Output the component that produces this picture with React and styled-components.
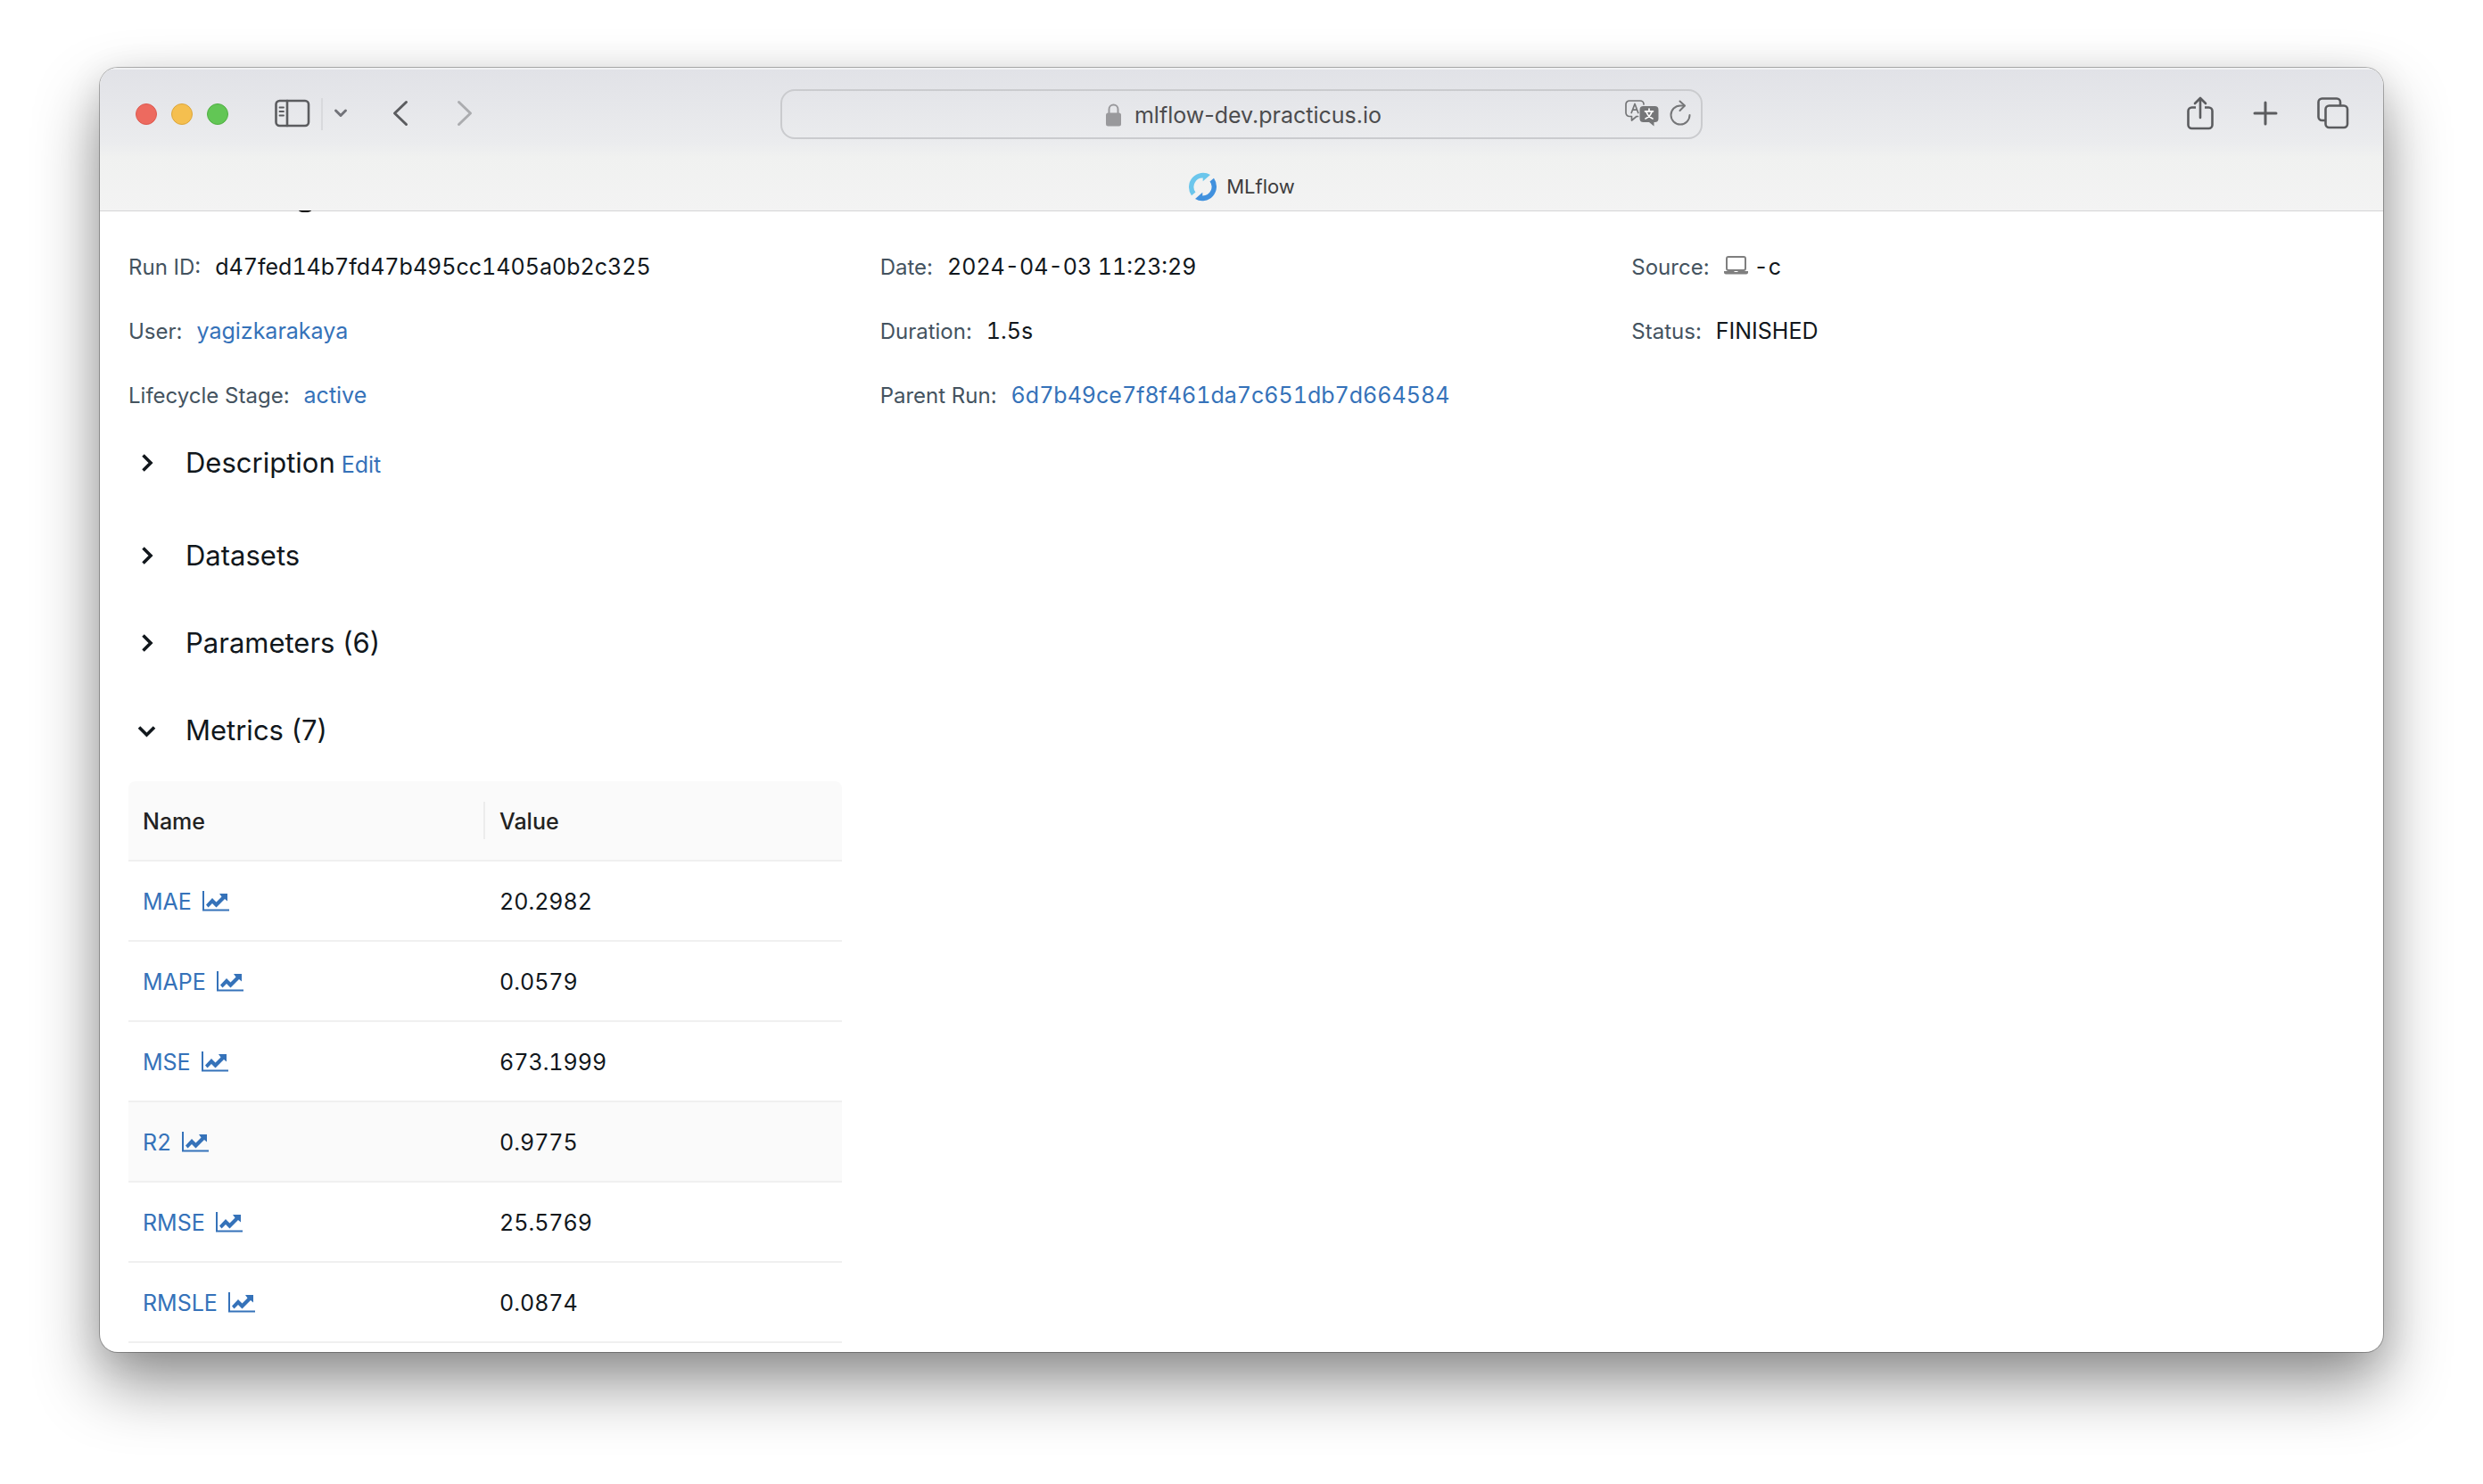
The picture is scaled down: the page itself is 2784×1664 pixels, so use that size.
import React from "react";
import styled, { createGlobalStyle } from "styled-components";

const GlobalStyle = createGlobalStyle`
  *, *::before, *::after { box-sizing: border-box; }
  body {
    margin: 0;
    background: #fff;
    color: #11171c;
    font-family: Inter, "Liberation Sans", sans-serif;
    font-size: 25px;
  }
  svg { display: block; flex: none; }
`;

const Desktop = styled.div`
  height: 100vh;
  padding: 76px 112px 148px;
  overflow: hidden;
`;

const BrowserWindow = styled.div`
  height: 100%;
  display: flex;
  flex-direction: column;
  border-radius: 20px;
  overflow: hidden;
  background: #fff;
  box-shadow: 0 0 0 1px rgba(0, 0, 0, 0.28), 0 36px 72px rgba(0, 0, 0, 0.42), 0 8px 40px rgba(0, 0, 0, 0.1);
`;

const Chrome = styled.header`
  flex: none;
  background: linear-gradient(#e1e2e7 0, #e4e5e9 28px, #ebecee 84px, #f0f1f0 100px, #f3f3f3 160px);
  border-bottom: 1px solid #d4d5d6;
  box-shadow: inset 0 2px 0 rgba(255, 255, 255, 0.5);
`;

const Toolbar = styled.div`
  height: 104px;
  padding: 0 38px;
  display: grid;
  grid-template-columns: 1fr minmax(0, 1034px) 1fr;
  align-items: center;
`;

const ToolGroup = styled.div`
  display: flex;
  align-items: center;
  justify-content: ${(p) => (p.$end ? "flex-end" : "flex-start")};
  gap: ${(p) => p.$gap}px;
  margin-left: ${(p) => p.$push || 0}px;
`;

const Light = styled.button`
  width: 24px;
  height: 24px;
  padding: 0;
  border-radius: 50%;
  border: 1px solid ${(p) => p.$edge};
  background: ${(p) => p.$fill};
`;

const IconButton = styled.button`
  display: flex;
  padding: 0 0 2px;
  border: 0;
  background: none;
  color: ${(p) => p.$tone || "#5b5c5f"};
`;

const Divider = styled.span`
  width: 2px;
  height: 36px;
  background: #d8d9dc;
`;

const AddressBar = styled.div`
  height: 56px;
  display: grid;
  grid-template-columns: 1fr auto 1fr;
  align-items: center;
  padding: 0 11px;
  border: 2px solid #cacbce;
  border-radius: 16px;
  color: #4c4c4e;
`;

const Address = styled.div`
  grid-column: 2;
  display: flex;
  align-items: center;
  gap: 13px;
  line-height: 32px;
  padding: 2px 0 0 4px;
`;

const TabStrip = styled.div`
  height: 56px;
  padding-top: 2px;
  display: flex;
  align-items: center;
  justify-content: center;
  gap: 10px;
  font-size: 22px;
  color: #3d3d3e;
`;

const Page = styled.main`
  flex: 1;
  min-height: 0;
  overflow: hidden;
  margin-top: -1px;
  padding-left: 32px;
`;

const TitleTail = styled.div`
  width: 14px;
  height: 2px;
  margin: 0 0 25px 191px;
  border-radius: 0 0 7px 7px / 0 0 2px 2px;
  background: #000;
`;

const Details = styled.dl`
  display: grid;
  grid-template-columns: repeat(3, 1fr);
  margin: 0;
`;

const Detail = styled.div`
  height: 72px;
  display: flex;
  align-items: baseline;
  gap: 16px;
  line-height: 72px;
`;

const Term = styled.dt`
  font-size: 24px;
  color: #44535f;
`;

const Definition = styled.dd`
  display: flex;
  align-items: baseline;
  gap: 7px;
  margin: 0;
  font-variant-numeric: tabular-nums;
`;

const Link = styled.a`
  color: #3572b9;
  text-decoration: none;
`;

const Section = styled.section`
  display: flex;
  align-items: center;
  height: ${(p) => (p.$first ? 80 : 98)}px;
  margin-bottom: ${(p) => (p.$first ? 15 : 0)}px;
`;

const SectionToggle = styled.button`
  display: flex;
  align-items: center;
  gap: 26px;
  padding: 0 0 0 4px;
  border: 0;
  background: none;
  color: inherit;
  font: inherit;
  font-size: 31px;
  line-height: 44px;
`;

const EditLink = styled(Link)`
  line-height: 44px;
  margin: 4px 0 0 7px;
`;

const MetricsTable = styled.table`
  width: 800px;
  max-width: 100%;
  margin-top: 8px;
  table-layout: fixed;
  border-collapse: separate;
  border-spacing: 0;
  line-height: 40px;
  font-variant-numeric: tabular-nums;
`;

const HeadCell = styled.th`
  height: 90px;
  padding: 2px 16px 0;
  position: relative;
  text-align: left;
  font-weight: 500;
  color: #222;
  background: #fafafa;
  border-bottom: 2px solid #f0f0f0;
  &:first-child { border-top-left-radius: 8px; }
  &:last-child { border-top-right-radius: 8px; }
  &:first-child::after {
    content: "";
    position: absolute;
    right: 0;
    top: 23px;
    width: 2px;
    height: 42px;
    background: #ececec;
  }
`;

const Cell = styled.td`
  height: 90px;
  padding: 2px 16px 0;
  background: ${(p) => (p.$active ? "#fafafa" : "#fff")};
  border-bottom: 2px solid #f0f0f0;
`;

const MetricLink = styled(Link)`
  display: flex;
  align-items: center;
  gap: 11px;
`;

const Stroke = ({ w, h, sw = 3, children }) => (
  <svg width={w} height={h} viewBox={`0 0 ${w} ${h}`} fill="none" stroke="currentColor" strokeWidth={sw} strokeLinecap="round" strokeLinejoin="round" aria-hidden="true">
    {children}
  </svg>
);

const SidebarIcon = () => (
  <Stroke w={40} h={32} sw={2.6}>
    <rect x="1.5" y="2" width="36.5" height="28" rx="4" />
    <path d="M14 2v28" />
    <path strokeWidth="1.8" d="M5.5 9.5h4.500M5.5 14h4.500M5.500 18.500h4.500" />
  </Stroke>
);
const SmallChevron = () => <Stroke w={16} h={12} sw={3}><path d="M2.500 3l5.500 5.500L13.500 3" /></Stroke>;
const BackIcon = () => <Stroke w={18} h={30}><path d="M15.500 2.500L2.500 15l13 12.500" /></Stroke>;
const ForwardIcon = () => <Stroke w={18} h={30}><path d="M2.500 2.500L15.500 15l-13 12.500" /></Stroke>;
const ShareIcon = () => (
  <Stroke w={30} h={38} sw={2.6}>
    <path d="M10 12.500H5.500a4 4 0 0 0-4 4V32a4 4 0 0 0 4 4h19a4 4 0 0 0 4-4V16.500a4 4 0 0 0-4-4H20" strokeLinecap="butt" />
    <path d="M15 24V2.500M9 8l6-6 6 6" />
  </Stroke>
);
const PlusIcon = () => <Stroke w={28} h={28}><path d="M14 2v24M2 14h24" /></Stroke>;
const TabsIcon = () => (
  <Stroke w={36} h={36} sw={2.6}>
    <rect x="9.500" y="9.500" width="24.500" height="24.500" rx="4" />
    <path d="M26 9V5.500a4 4 0 0 0-4-4H5.500a4 4 0 0 0-4 4V22a4 4 0 0 0 4 4H9" />
  </Stroke>
);
const LockIcon = () => (
  <svg width="20" height="26" viewBox="0 0 20 26" aria-hidden="true">
    <rect x="1" y="10.500" width="17" height="15" rx="2.500" fill="#99999c" />
    <path d="M4.500 11V6.500a5 5 0 0 1 10 0V11" fill="none" stroke="#99999c" strokeWidth="2" />
  </svg>
);
const TranslateIcon = () => (
  <Stroke w={38} h={30} sw={1.7}>
    <path d="M14.500 18.500H13l-5.500 4.500v-4.500H5a4 4 0 0 1-4-4V5a4 4 0 0 1 4-4h12a4 4 0 0 1 4 4" />
    <path d="M7.200 14.500L11 4.500l3.800 10M8.500 11.200h5" />
    <path d="M20.500 7h13a4 4 0 0 1 4 4v10a4 4 0 0 1-4 4h-1v4.500L27 25h-6.500a4 4 0 0 1-4-4V11a4 4 0 0 1 4-4z" fill="currentColor" stroke="none" />
    <path stroke="#fff" d="M27 10v2.500M22.500 12.800h9M30 13.500c-1 3-3.500 6-7 7.500M24 13.500c1 3 3.500 6 7 7.500" />
  </Stroke>
);
const ReloadIcon = () => (
  <Stroke w={24} h={30} sw={2}>
    <path d="M22.500 17A10.500 10.500 0 1 1 12 6.500h4.500" />
    <path d="M11.500 1.500l5.500 5-5.500 5.500" />
  </Stroke>
);
const MlflowLogo = () => (
  <svg width="33" height="33" viewBox="0 0 33 33" aria-hidden="true">
    <path fill="#6bc6ec" d="M4 26.200A16 16 0 0 1 25 3L16.700 10.300V6.500A10 10 0 0 0 8.500 22.500z" />
    <path fill="#4191de" d="M29 6.800A16 16 0 0 1 8 30L16.300 22.700V26.500A10 10 0 0 0 24.500 10.500z" />
  </svg>
);
const LaptopSvg = styled.svg`
  margin-bottom: -3px;
`;
const LaptopIcon = () => (
  <LaptopSvg width="27" height="22" viewBox="0 0 27 22" aria-hidden="true">
    <rect x="3" y="2" width="21" height="15" rx="2" fill="none" stroke="#7f7f7f" strokeWidth="2" />
    <path fill="#7f7f7f" d="M0 18h27v1.500a2 2 0 0 1-2 2H2a2 2 0 0 1-2-2z" />
    <path fill="#fff" d="M11.500 18h4v1h-4z" />
  </LaptopSvg>
);
const Caret = ({ open }) => (
  <svg width="34" height="34" viewBox="0 0 34 34" fill="none" stroke="currentColor" strokeWidth="3.600" aria-hidden="true">
    {open ? <path d="M8 13.500l8.500 8.500 8.500-8.500" /> : <path d="M12.500 8.500l8.500 8.500-8.500 8.500" />}
  </svg>
);
const ChartIcon = () => (
  <svg width="32" height="26" viewBox="0 0 32 26" fill="currentColor" aria-hidden="true">
    <path d="M1 1h2v20.500h28v2H1z" />
    <path d="M5 16.500L12 9l4.500 4.500L22.500 7.500 20 4h9v8.500L26 10l-9.500 9.500L12 15l-4.500 4.500z" />
  </svg>
);

const sections = [
  { title: "Description", first: true, edit: true },
  { title: "Datasets" },
  { title: "Parameters (6)" },
  { title: "Metrics (7)", open: true },
];

const metrics = [
  ["MAE", "20.2982"],
  ["MAPE", "0.0579"],
  ["MSE", "673.1999"],
  ["R2", "0.9775"],
  ["RMSE", "25.5769"],
  ["RMSLE", "0.0874"],
];

const details = [
  ["Run ID:", "d47fed14b7fd47b495cc1405a0b2c325"],
  ["Date:", "2024-04-03 11:23:29"],
  ["Source:", <><LaptopIcon />-c</>],
  ["User:", <Link href="#user">yagizkarakaya</Link>],
  ["Duration:", "1.5s"],
  ["Status:", "FINISHED"],
  ["Lifecycle Stage:", <Link href="#active">active</Link>],
  ["Parent Run:", <Link href="#parent">6d7b49ce7f8f461da7c651db7d664584</Link>],
];

export default function App() {
  return (
    <Desktop>
      <GlobalStyle />
      <BrowserWindow>
        <Chrome>
          <Toolbar>
            <ToolGroup $gap={0}>
              <ToolGroup $gap={16} $push={2}>
                <Light aria-label="Close" $fill="#ed6a5f" $edge="#dc5a50" />
                <Light aria-label="Minimise" $fill="#f5bf4f" $edge="#dca63c" />
                <Light aria-label="Zoom" $fill="#62c655" $edge="#50ae43" />
              </ToolGroup>
              <ToolGroup $gap={12} $push={52}>
                <IconButton aria-label="Sidebar"><SidebarIcon /></IconButton>
                <Divider />
                <IconButton aria-label="Sidebar menu" $tone="#727379"><SmallChevron /></IconButton>
              </ToolGroup>
              <ToolGroup $gap={54} $push={50}>
                <IconButton aria-label="Back"><BackIcon /></IconButton>
                <IconButton aria-label="Forward" $tone="#abacaf"><ForwardIcon /></IconButton>
              </ToolGroup>
            </ToolGroup>
            <AddressBar>
              <Address><LockIcon /><span>mlflow-dev.practicus.io</span></Address>
              <ToolGroup $end $gap={12}>
                <IconButton aria-label="Translate" $tone="#757678"><TranslateIcon /></IconButton>
                <IconButton aria-label="Reload" $tone="#757678"><ReloadIcon /></IconButton>
              </ToolGroup>
            </AddressBar>
            <ToolGroup $end $gap={44}>
              <IconButton aria-label="Share"><ShareIcon /></IconButton>
              <IconButton aria-label="New tab"><PlusIcon /></IconButton>
              <IconButton aria-label="Tab overview"><TabsIcon /></IconButton>
            </ToolGroup>
          </Toolbar>
          <TabStrip><MlflowLogo />MLflow</TabStrip>
        </Chrome>
        <Page>
          <TitleTail />
          <Details>
            {details.map(([term, value]) => (
              <Detail key={term}>
                <Term>{term}</Term>
                <Definition>{value}</Definition>
              </Detail>
            ))}
          </Details>
          {sections.map((s) => (
            <Section key={s.title} $first={s.first}>
              <SectionToggle aria-expanded={!!s.open}>
                <Caret open={s.open} />
                {s.title}
              </SectionToggle>
              {s.edit && <EditLink href="#edit">Edit</EditLink>}
            </Section>
          ))}
          <MetricsTable>
            <thead>
              <tr><HeadCell scope="col">Name</HeadCell><HeadCell scope="col">Value</HeadCell></tr>
            </thead>
            <tbody>
              {metrics.map(([name, value]) => (
                <tr key={name}>
                  <Cell $active={name === "R2"}><MetricLink href={`#${name}`}>{name}<ChartIcon /></MetricLink></Cell>
                  <Cell $active={name === "R2"}>{value}</Cell>
                </tr>
              ))}
            </tbody>
          </MetricsTable>
        </Page>
      </BrowserWindow>
    </Desktop>
  );
}
